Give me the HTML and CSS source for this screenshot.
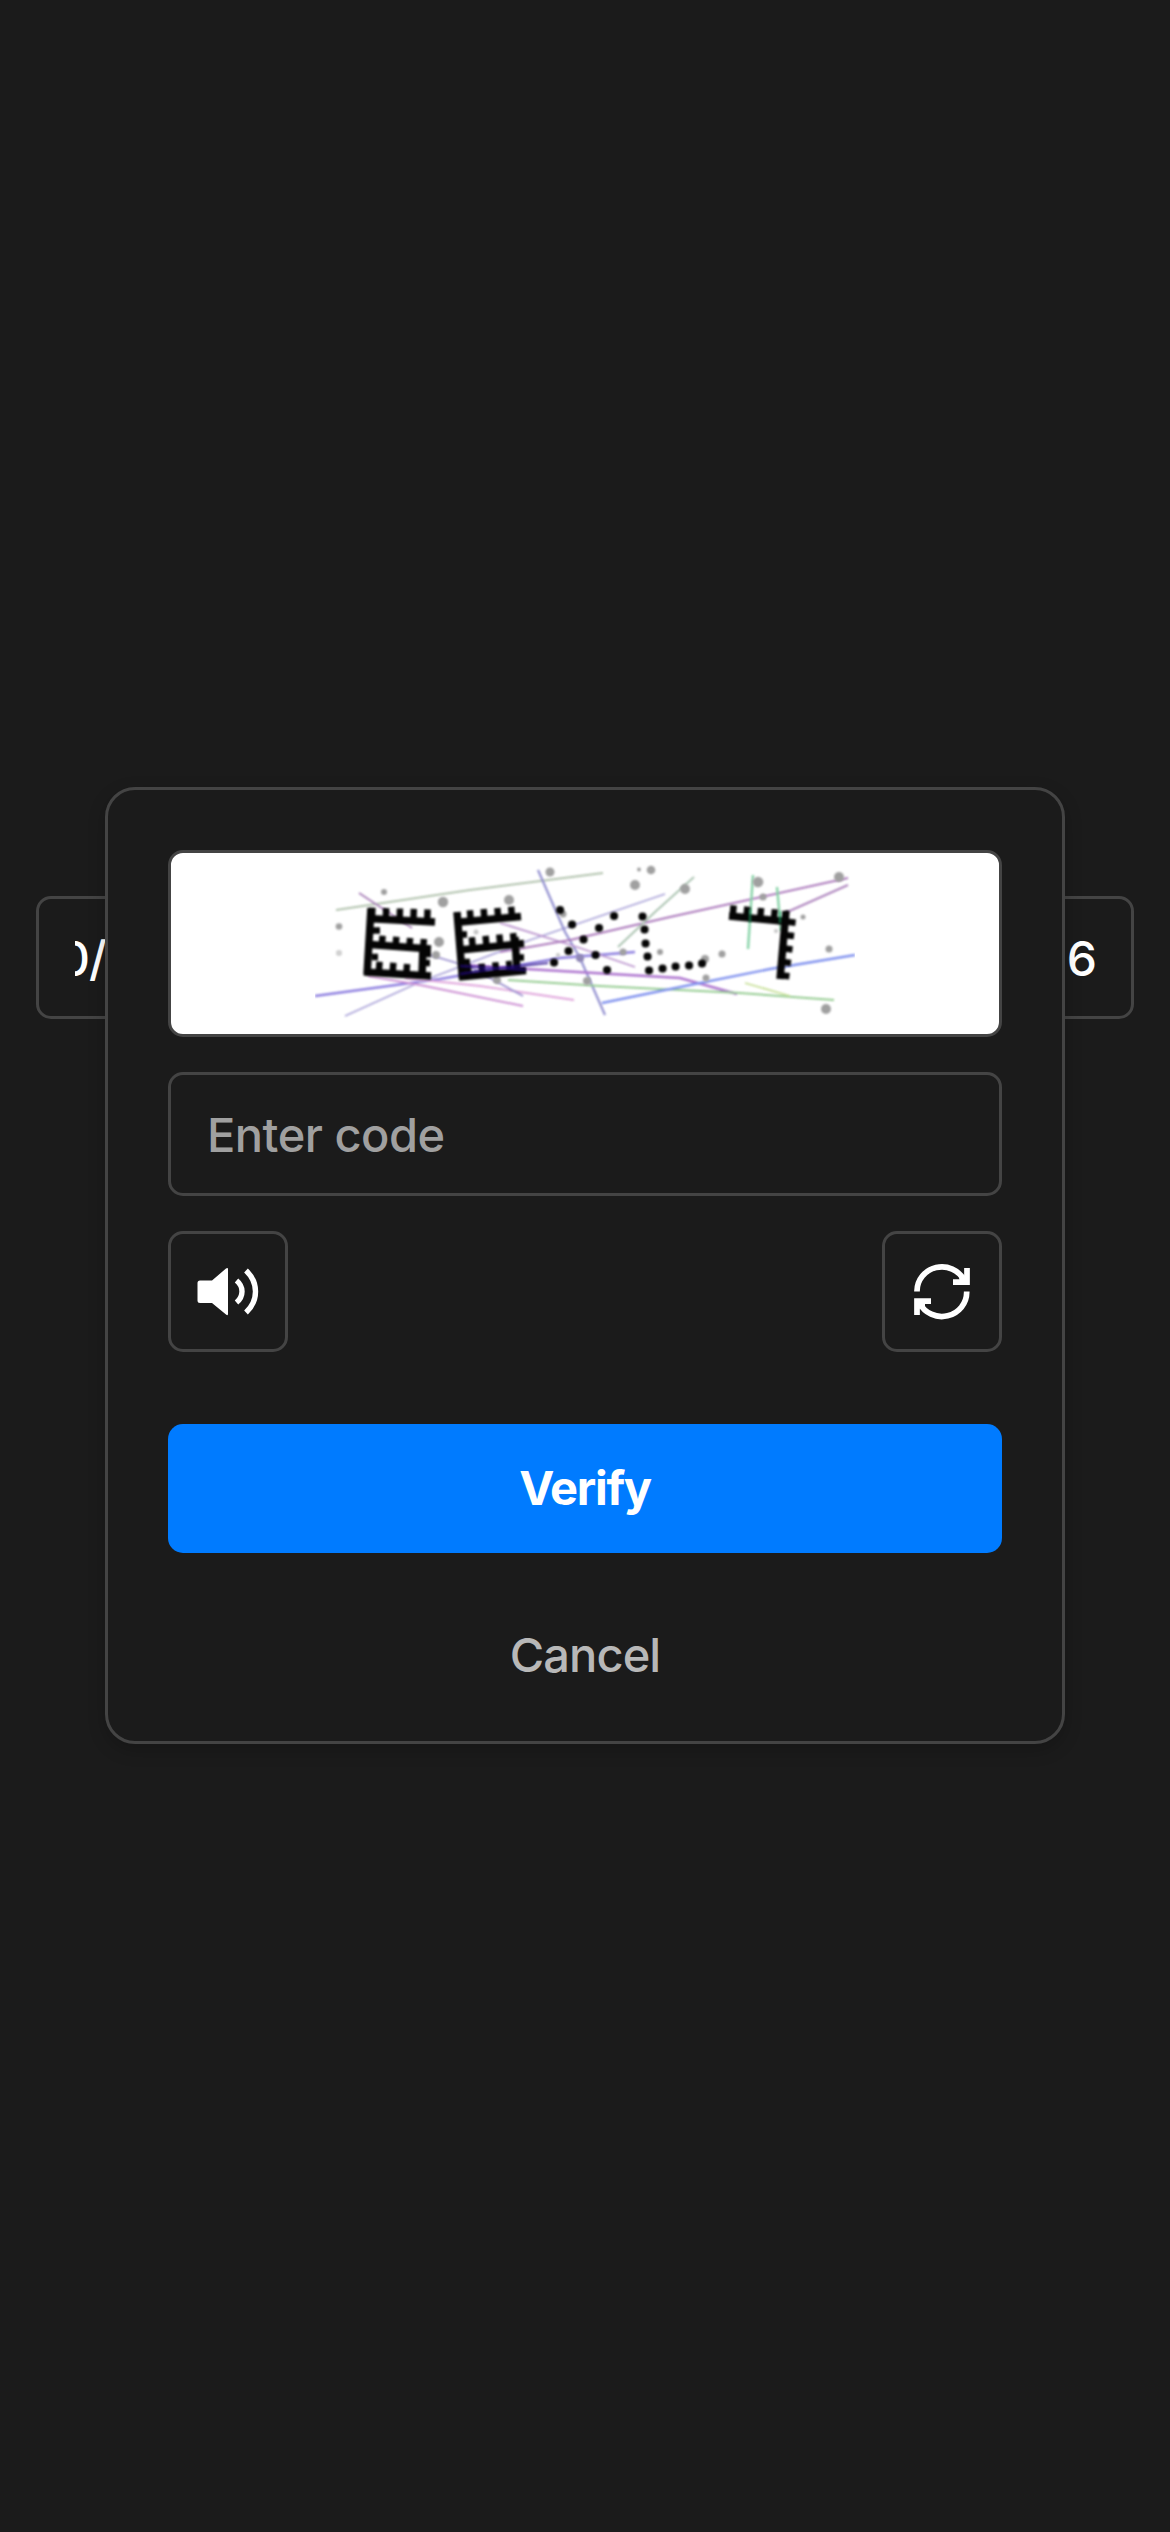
FILE: index.html
```html
<!DOCTYPE html>
<html lang="en">
<head>
<meta charset="utf-8">
<title>Verification</title>
<link rel="stylesheet" href="styles.css">
</head>
<body>
<div class="backfield"><span class="clip"><span class="shift">0/</span></span><span class="end">6</span></div>
<main class="page">
<section class="card">
  <div class="captcha">
    <svg class="captcha-art" viewBox="315 853 540 180" fill="none">
      <g stroke-width="1.8" class="soft lines">
        <path stroke="#a9bca4" d="M336 910L470 890L603 873"/>
        <path stroke="#9f72b0" d="M359 893L412 928"/>
        <path stroke="#8373dd" stroke-width="2.3" d="M315 996L440 979L560 958L635 952"/>
        <path stroke="#a29ad5" d="M345 1016L420 982L530 940L665 894"/>
        <path stroke="#c885cf" stroke-width="2" d="M368 976L420 985L523 1006"/>
        <path stroke="#dc9ad7" d="M405 978L480 986L574 1000"/>
        <path stroke="#8d80c9" d="M430 955L470 967L523 996"/>
        <path stroke="#8784cb" stroke-width="2.2" d="M538 870L565 932L580 958L605 1015"/>
        <path stroke="#b388c8" d="M500 923L580 948L635 967"/>
        <path stroke="#a26ab4" stroke-width="2" d="M500 952L570 940L670 917L848 878"/>
        <path stroke="#a476b6" stroke-width="2" d="M785 913L848 885"/>
        <path stroke="#a566ca" stroke-width="2.5" d="M460 965L680 978L737 994"/>
        <path stroke="#8ac686" stroke-width="2" d="M508 980L600 986L740 993L834 1000"/>
        <path stroke="#c0dc8a" d="M745 983L790 996"/>
        <path stroke="#7588ed" stroke-width="2.4" d="M602 1003L690 985L770 969L855 955"/>
        <path stroke="#a0bca7" d="M618 947L655 912L694 877"/>
        <path stroke="#79ce9d" stroke-width="2.4" d="M753 875L748 949M777 887L781 931"/>
      </g>
      <g fill="#a0a0a0" class="soft">
        <circle cx="384" cy="892" r="3"/><circle cx="443" cy="902" r="5.2"/><circle cx="339" cy="926.500" r="3.300"/><circle cx="339" cy="953" r="3" opacity=".5"/><circle cx="439" cy="942" r="5"/><circle cx="436" cy="955" r="4"/><circle cx="476" cy="932" r="2.500" opacity=".6"/>
        <circle cx="509" cy="900" r="5"/><circle cx="550" cy="872" r="4.500"/><circle cx="635" cy="885" r="5"/><circle cx="651" cy="870" r="4.300"/><circle cx="639" cy="869.500" r="2"/><circle cx="563" cy="914" r="3.500"/><circle cx="580" cy="958" r="4" fill="#9088b5"/><circle cx="587" cy="981" r="4"/><circle cx="623" cy="952" r="3.500"/><circle cx="660" cy="952" r="3"/><circle cx="558" cy="955" r="2" opacity=".6"/><circle cx="497" cy="980" r="4"/>
        <circle cx="685" cy="889" r="5"/><circle cx="758" cy="882" r="5.300"/><circle cx="763" cy="897" r="3.500"/><circle cx="839" cy="877" r="5"/><circle cx="803" cy="917" r="2.500"/><circle cx="829" cy="949" r="3.500"/><circle cx="722" cy="954" r="3.500"/><circle cx="705" cy="959" r="4"/><circle cx="706" cy="978" r="3.500"/><circle cx="826" cy="1009" r="5"/><circle cx="776" cy="931" r="2" opacity=".6"/>
      </g>
      <g stroke="#050505" stroke-width="7.500" class="soft">
        <path d="M371 908L367 975M367 918.500L435 922M370 944.500L431 949M364 972L431 976M423 947L422 976"/>
        <path stroke-width="9" stroke-dasharray="6.500 7.300" d="M369 912L431 914"/>
        <path stroke-width="9" stroke-dasharray="6.500 7.300" d="M379 940L430 944"/>
        <path stroke-width="9" stroke-dasharray="6.500 7.300" d="M376 966L415 969"/>
        <path stroke-width="6.500" d="M373 930.500h7M372 957h6M425 954h6M424 963h6"/>
        <path d="M457 912L462.500 979M455 922.500L521 916.500M460 950L524 943.500M459 977L526 970.500M515 937L517 972"/>
        <path stroke-width="9" stroke-dasharray="6.500 7.300" d="M467 915L515 911"/>
        <path stroke-width="9" stroke-dasharray="6.500 7.300" d="M469 942L519 937"/>
        <path stroke-width="9" stroke-dasharray="6.500 7.300" d="M465 970L512 965"/>
        <path stroke-width="6.500" d="M459 934.500h8M462 962h8M517 957.500h7"/>
        <path d="M729 916L787 921.500M786 911L780 979"/>
        <path stroke-width="9" stroke-dasharray="6.500 7.300" d="M730 909.500L788 915"/>
        <path stroke-width="8" stroke-dasharray="6.500 7" d="M792 919L785 980"/>
      </g>
      <path class="soft" stroke="#050505" stroke-width="8" stroke-linecap="round" d="M560 910h.1M572 924.500h.1M583.500 939.500h.1M568.500 951h.1M595.500 955h.1M607 970h.1M614 916h.1M599 928h.1M554 962.500h.1M642.500 916.500h.1M644.500 929.500h.1M645.500 943.500h.1M647.500 956.500h.1M649 970.500h.1M662.500 968.500h.1M675.500 966.500h.1M689 965.500h.1M702 963.500h.1"/>
      <path class="soft" stroke="#22068a" stroke-width="2.500" opacity=".65" d="M460 974L500 968L548 963M460 966L526 970"/>
      <path class="soft" stroke="#19995c" stroke-width="2.400" opacity=".6" d="M750 909V922M780 911V923"/>
    </svg>
  </div>
  <input class="code" type="text" placeholder="Enter code" aria-label="Enter code">
  <div class="tools">
    <button class="tool" aria-label="Play audio">
      <svg width="120" height="120" viewBox="168 1232 120 120"><path fill="#fff" d="M200 1280.500H212L226 1268.500Q228 1267.500 228 1269V1314Q228 1316 226 1314.500L212 1303H200Q197.500 1303 197.500 1300.500V1283Q197.500 1280.500 200 1280.500Z"/><path fill="none" stroke="#fff" stroke-width="5.400" d="M236.500 1280.500Q242 1285 242 1291.500T236.500 1302.500M246 1270.500Q255.500 1279.500 255.500 1291.500T246 1312.500"/></svg>
    </button>
    <button class="tool" aria-label="New image">
      <svg width="120" height="120" viewBox="882 1232 120 120" fill="none" stroke="#fff" stroke-width="5.700"><path d="M917 1291.500V1291A24.900 24.300 0 0 1 964 1280M966.700 1291.500V1292A24.900 24.300 0 0 1 919.500 1303"/><path d="M967 1268V1282.200H953M917 1315V1301.200H931"/><path fill="#fff" stroke="none" d="M959 1277L966 1275V1283H960ZM917 1300H925V1308L917 1309Z"/></svg>
    </button>
  </div>
  <button class="verify">Verify</button>
  <button class="cancel">Cancel</button>
</section>
</main>
</body>
</html>
```
FILE: styles.css
```css
* { box-sizing: border-box; }
body {
  margin: 0;
  height: 2532px;
  position: relative;
  overflow: hidden;
  background: #1b1b1b;
  color: #fff;
  font: 47px/1.2 Inter, "Liberation Sans", sans-serif;
}
button, input { font: inherit; color: inherit; margin: 0; }
.page { display: flex; justify-content: center; padding-top: 787px; }
.backfield {
  position: absolute;
  left: 36px;
  top: 896px;
  width: 1098px;
  height: 123px;
  display: flex;
  align-items: center;
  justify-content: space-between;
  padding: 3px 34px 0 36px;
  border: 3px solid #444;
  border-radius: 15px;
  font-size: 48px;
  font-weight: 500;
}
.clip { overflow: hidden; width: 60px; white-space: nowrap; }
.shift { display: inline-block; margin-left: -16px; letter-spacing: -1px; }
.card {
  position: relative;
  display: flex;
  flex-direction: column;
  width: 960px;
  height: 957px;
  padding: 60px;
  background: #1b1b1b;
  border: 3px solid #444;
  border-radius: 30px;
  box-shadow: 0 6px 18px rgba(0, 0, 0, .2);
}
.card > * { flex: none; }
.captcha {
  display: flex;
  justify-content: center;
  height: 187px;
  background: #fff;
  border: 3px solid #444;
  border-radius: 15px;
}
.captcha-art { width: 540px; height: 180px; }
.soft { filter: blur(.9px); }
.lines { opacity: .9; }
.code {
  height: 124px;
  margin-top: 35px;
  padding: 0 36px;
  background: transparent;
  border: 3px solid #444;
  border-radius: 15px;
  outline: 0;
  font-weight: 450;
  letter-spacing: -.5px;
}
.code::placeholder { color: #a0a0a0; opacity: 1; }
.tools { display: flex; justify-content: space-between; margin-top: 35px; }
.tool {
  display: flex;
  align-items: center;
  justify-content: center;
  width: 120px;
  height: 121px;
  padding: 0;
  background: transparent;
  border: 3px solid #444;
  border-radius: 15px;
}
.tool svg { flex: none; }
.verify {
  height: 129px;
  margin-top: 72px;
  padding: 0;
  border: 0;
  border-radius: 15px;
  background: #007bff;
  font-weight: 700;
  letter-spacing: -1.3px;
}
.cancel {
  align-self: center;
  height: 54px;
  margin-top: 74px;
  padding: 0;
  border: 0;
  background: transparent;
  color: #b8b8b8;
  font-weight: 450;
  letter-spacing: -.9px;
}
```
